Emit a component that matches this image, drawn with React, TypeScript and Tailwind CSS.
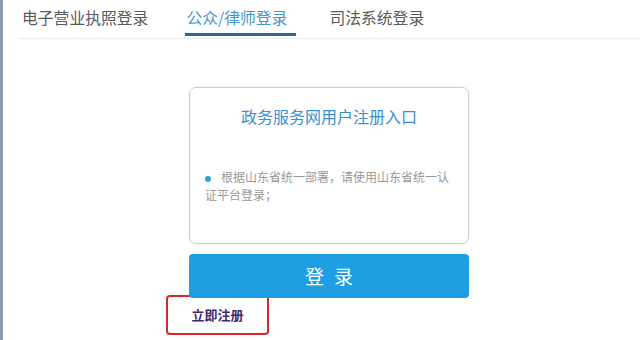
export default function App() {
  return (
    <div
      className="relative w-[640px] h-[340px] overflow-hidden bg-white border-l-[3px] border-[#8a9bb0]"
      style={{ fontFamily: '"Noto Sans CJK SC", "Noto Sans", sans-serif' }}
    >
      {/* tabs */}
      <div className="ml-[15px] flex h-[39px] items-start border-b border-[#ececec]">
        <div className="ml-[4px] mt-[5px] text-[15.8px] leading-[26px] text-[#5a5a5a]">电子营业执照登录</div>
        <div className="ml-[38px] mt-[5px] flex flex-col">
          <span className="text-[15.8px] leading-[26px] text-[#3f97d2]">公众/律师登录</span>
          <span className="mt-[2px] h-[3px] w-[111px] -ml-[1px] bg-[#2d6a91]" />
        </div>
        <div className="ml-[33px] mt-[5px] text-[15.8px] leading-[26px] text-[#5a5a5a]">司法系统登录</div>
      </div>

      {/* card */}
      <div className="ml-[186px] mt-[48px] flex w-[280px] flex-col">
        <div className="h-[157px] rounded-[7px] border border-[#cfcfcf] shadow-[0_0_3px_rgba(0,0,0,0.08)]">
          <div className="mt-[16px] text-center text-[16px] leading-[24px] text-[#3b8fd0]">政务服务网用户注册入口</div>
          <div className="mt-[40px] pl-[15px] pr-[10px] text-[12px] leading-[18px] text-[#999]">
            <span className="mr-[10px] inline-block h-[6px] w-[6px] rounded-full bg-[#2aa3d6] align-middle" />
            根据山东省统一部署，请使用山东省统一认证平台登录；
          </div>
        </div>
        <div className="mt-[10px] flex h-[44px] items-center justify-center rounded-[4px] bg-[#1d9fe2] text-[19px] tracking-[10px] text-white">
          <span className="ml-[10px]">登录</span>
        </div>
      </div>

      {/* register */}
      <div className="ml-[163px] -mt-[3px] flex h-[40px] w-[103px] items-center justify-center rounded-[4px] border-2 border-[#d9262b]">
        <span className="text-[13px] font-bold text-[#3d2b6e]">立即注册</span>
      </div>
    </div>
  )
}
